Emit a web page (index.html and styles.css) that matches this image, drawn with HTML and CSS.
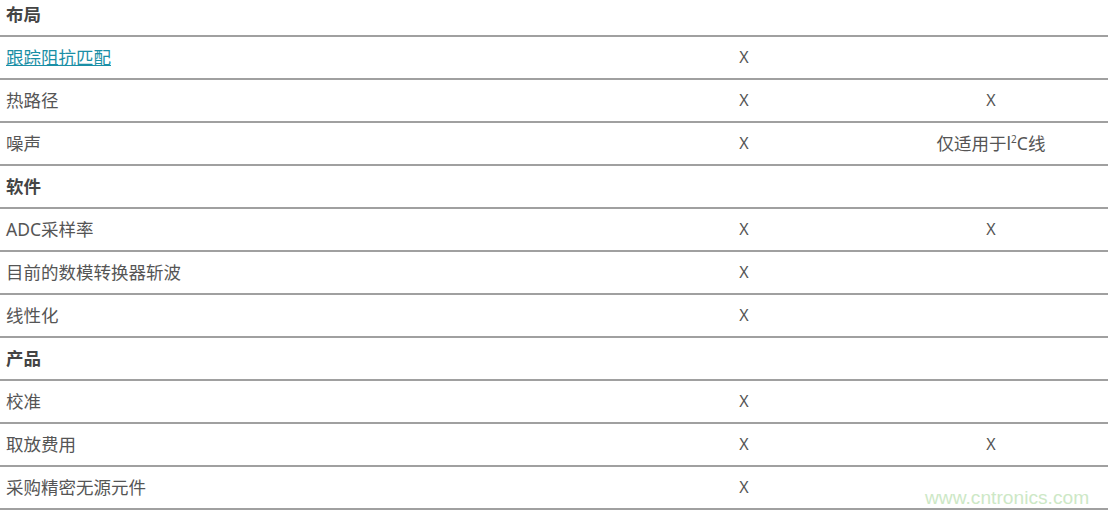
FILE: index.html
```html
<!DOCTYPE html>
<html lang="zh">
<head>
<meta charset="utf-8">
<link rel="stylesheet" href="styles.css">
</head>
<body>
<div class="page">
<table class="matrix">
<colgroup><col class="c1"><col class="c2"><col class="c3"></colgroup>
<tbody>
<tr class="sec"><td>布局</td><td></td><td></td></tr>
<tr><td><a href="#">跟踪阻抗匹配</a></td><td class="m">X</td><td class="m"></td></tr>
<tr><td>热路径</td><td class="m">X</td><td class="m">X</td></tr>
<tr><td>噪声</td><td class="m">X</td><td class="m note">仅适用于l<sup>2</sup>C线</td></tr>
<tr class="sec"><td>软件</td><td></td><td></td></tr>
<tr><td>ADC采样率</td><td class="m">X</td><td class="m">X</td></tr>
<tr><td>目前的数模转换器斩波</td><td class="m">X</td><td class="m"></td></tr>
<tr><td>线性化</td><td class="m">X</td><td class="m"></td></tr>
<tr class="sec"><td>产品</td><td></td><td></td></tr>
<tr><td>校准</td><td class="m">X</td><td class="m"></td></tr>
<tr><td>取放费用</td><td class="m">X</td><td class="m">X</td></tr>
<tr><td>采购精密无源元件</td><td class="m">X</td><td class="m"></td></tr>
</tbody>
</table>
<div class="watermark">www.cntronics.com</div>
</div>
</body>
</html>
```
FILE: styles.css
```css
html, body {
  margin: 0;
  padding: 0;
  background: #fff;
}
.page {
  position: relative;
  width: 1108px;
  height: 514px;
  overflow: hidden;
}
.matrix {
  width: 1108px;
  margin-top: -6px;
  border-collapse: collapse;
  table-layout: fixed;
  font-family: "Noto Sans", "Noto Sans CJK SC", sans-serif;
  font-size: 17.5px;
  color: #555;
}
.c1 { width: 614px; }
.c2 { width: 260px; }
.c3 { width: 234px; }
.matrix td {
  height: 41px;
  padding: 0 0 0 6px;
  border-bottom: 2px solid #a0a0a0;
  vertical-align: middle;
  line-height: 1.2;
  white-space: nowrap;
}
.matrix td.m {
  padding: 0;
  text-align: center;
  font-size: 16px;
}
.matrix td.note {
  font-size: 17.5px;
}
.matrix td.m sup {
  font-size: 10px;
  line-height: 0;
}
.sec td {
  font-weight: bold;
  color: #444;
}
.matrix a {
  color: #1a8fa6;
  text-decoration: underline;
}
.watermark {
  position: absolute;
  left: 925px;
  top: 487px;
  font-family: "Liberation Sans", Arial, sans-serif;
  font-size: 19.2px;
  color: #cde8c6;
}
```
